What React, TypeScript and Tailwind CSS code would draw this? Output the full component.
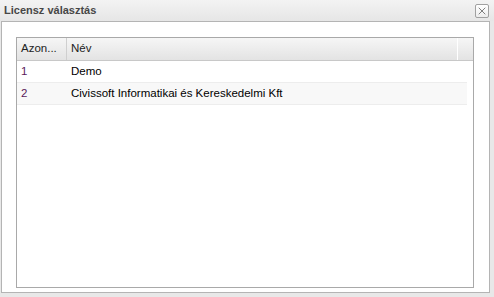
import { X } from "lucide-react";

const rows = [
  { id: "1", name: "Demo" },
  { id: "2", name: "Civissoft Informatikai és Kereskedelmi Kft" },
];

export default function App() {
  return (
    <div
      className="w-[494px] h-[297px] bg-[#e8e8e8] flex flex-col text-[11.5px] text-black"
      style={{ fontFamily: '"Liberation Sans", Arial, sans-serif' }}
    >
      <div className="h-[21px] shrink-0 flex items-center justify-between pl-[4px] pr-[5px] bg-gradient-to-b from-[#f3f3f3] to-[#e6e6e6]">
        <span className="text-[11px] font-bold text-[#474747]">Licensz választás</span>
        <div className="w-[14px] h-[14px] mt-[1px] border border-[#a0a0a0] rounded-[2px] bg-gradient-to-b from-white to-[#ececec] flex items-center justify-center">
          <X size={12} strokeWidth={1.5} className="text-[#555]" />
        </div>
      </div>
      <div className="flex-1 ml-[1px] mr-[4px] mb-[4px] border border-[#b4b4b4] bg-white pl-[14px] pr-[15px] pt-[15px] pb-[4px]">
        <div className="h-full border border-[#a9a9a9] flex flex-col">
          <div className="h-[23px] shrink-0 flex border-b border-[#c8c8c8] bg-gradient-to-b from-[#f6f6f6] to-[#e3e3e3] text-[#222]">
            <div className="w-[50px] pl-[4px] flex items-center border-r border-[#cfcfcf]">Azon...</div>
            <div className="flex-1 pl-[4px] flex items-center">Név</div>
            <div className="w-[16px] border-l border-white"></div>
          </div>
          <div className="flex-1 pr-[6px]">
            {rows.map((r, i) => (
              <div
                key={r.id}
                className={`h-[22px] flex items-center border-b border-[#ededed] ${i % 2 === 1 ? "bg-[#f8f8f8]" : "bg-white"}`}
              >
                <div className="w-[50px] pl-[4px] text-[#5b1a5b]">{r.id}</div>
                <div className="flex-1 pl-[4px]">{r.name}</div>
              </div>
            ))}
          </div>
        </div>
      </div>
    </div>
  );
}
